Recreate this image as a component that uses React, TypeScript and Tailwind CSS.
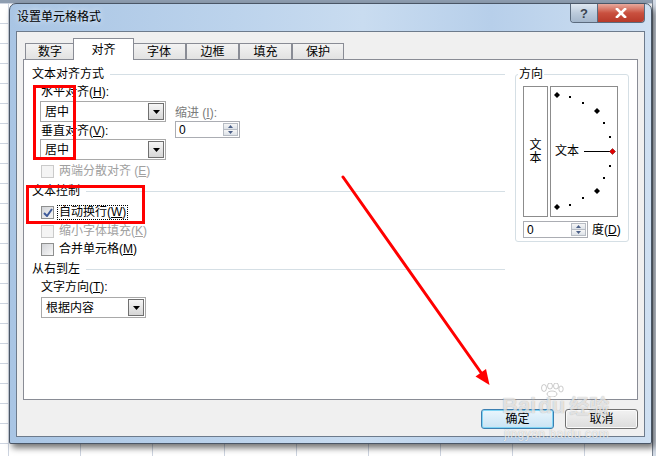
import React from "react";

const font = "font-['Liberation_Sans','Noto_Sans_CJK_SC',sans-serif]";

function DropBtn() {
  return (
    <div className="m-px flex w-[16px] items-center justify-center border border-[#707070] bg-gradient-to-b from-[#f6f6f6] to-[#d6d6d6]">
      <svg width="7" height="4" viewBox="0 0 7 4">
        <path d="M0 0H7L3.5 4Z" fill="#000" />
      </svg>
    </div>
  );
}

function Select({ value, cls }: { value: string; cls: string }) {
  return (
    <div className={`flex h-[21px] items-stretch border border-[#a9a9a9] bg-white ${cls}`}>
      <div className="flex flex-1 items-center pl-[4px] text-[12px] leading-none">{value}</div>
      <DropBtn />
    </div>
  );
}

function Spin({ cls }: { cls: string }) {
  return (
    <div className={`flex h-[17px] items-stretch border border-[#abadb3] bg-white ${cls}`}>
      <div className="flex flex-1 items-center pl-[3px] text-[12px] leading-none">0</div>
      <div className="m-px flex w-[15px] flex-col">
        <div className="flex flex-1 items-center justify-center border border-[#b7bcc4] bg-gradient-to-b from-[#f6f6f6] to-[#dde2e8]">
          <svg width="5" height="3" viewBox="0 0 5 3">
            <path d="M0 3H5L2.5 0Z" fill="#4c6088" />
          </svg>
        </div>
        <div className="-mt-px flex flex-1 items-center justify-center border border-[#b7bcc4] bg-gradient-to-b from-[#f6f6f6] to-[#dde2e8]">
          <svg width="5" height="3" viewBox="0 0 5 3">
            <path d="M0 0H5L2.5 3Z" fill="#4c6088" />
          </svg>
        </div>
      </div>
    </div>
  );
}

function Check({
  checked,
  disabled,
  focus,
  children,
  cls,
}: {
  checked?: boolean;
  disabled?: boolean;
  focus?: boolean;
  children: React.ReactNode;
  cls: string;
}) {
  return (
    <div className={`flex h-[14px] items-center ${cls}`}>
      <div
        className={`flex h-[13px] w-[13px] items-center justify-center border ${
          disabled ? "border-[#cacaca] bg-[#f4f4f4]" : "border-[#8e8f8f] bg-white"
        }`}
      >
        <div
          className={`flex h-[11px] w-[11px] items-center justify-center ${
            disabled ? "" : "bg-gradient-to-br from-[#d2d4d8] to-[#f8f8f8]"
          }`}
        >
          {checked && (
            <svg width="10" height="9" viewBox="0 0 10 9">
              <path d="M1 5L4 8L9 1" stroke="#3e5a9a" strokeWidth="2" fill="none" />
            </svg>
          )}
        </div>
      </div>
      <span
        className={`ml-[3px] px-[1px] text-[12px] leading-[13px] ${disabled ? "text-[#a0a0a0]" : "text-black"} ${
          focus ? "border border-dotted border-black" : "border border-transparent"
        }`}
      >
        {children}
      </span>
    </div>
  );
}

function Heading({ text }: { text: string }) {
  return (
    <div className="flex h-[14px] items-center">
      <span className="text-[12px] leading-[14px]">{text}</span>
      <div className="ml-[6px] h-px flex-1 bg-[#d5dfe5]" />
    </div>
  );
}

function Label({ children, cls }: { children: React.ReactNode; cls: string }) {
  return <div className={`h-[14px] text-[12px] leading-[14px] ${cls}`}>{children}</div>;
}

function Tab({ text, cls, active }: { text: string; cls: string; active?: boolean }) {
  return (
    <div
      className={`flex items-center justify-center border border-b-0 border-[#898c95] text-[12px] leading-none ${
        active
          ? "relative z-10 -mb-px h-[22px] bg-white"
          : "h-[16px] bg-gradient-to-b from-[#f3f3f3] to-[#e2e2e2]"
      } ${cls}`}
    >
      {text}
    </div>
  );
}

export default function App() {
  const dots: [number, number][] = [
    [19, 10],
    [32, 16],
    [53, 36],
    [59, 50],
    [59, 79],
    [53, 91],
    [32, 111],
    [19, 118],
  ];
  const diamonds: [number, number][] = [
    [6, 8],
    [46, 24],
    [46, 104],
    [6, 120],
  ];
  return (
    <div
      className={`relative h-[456px] w-[656px] overflow-hidden bg-white bg-[linear-gradient(#cdd4e0_1px,transparent_1px),linear-gradient(90deg,#cdd4e0_1px,transparent_1px)] bg-[length:72px_20px] bg-[position:8px_3px] text-black ${font}`}
    >
      {/* desktop strips */}
      <div className="absolute left-0 top-0 h-[3px] w-full bg-[#8e9db0]" />
      <div className="absolute right-0 top-0 h-full w-[4px] border-l border-[#7d8794] bg-[#d3dbe6]" />

      {/* window */}
      <div className="absolute left-[9px] top-[3px] flex h-[441px] w-[643px] flex-col rounded-t-[7px] rounded-b-[2px] border border-[#4a5666] bg-[linear-gradient(90deg,#a9c5e4,#bcd3ec_35%,#c9dcf0_55%,#b7cfea_75%,#cfe0f2)] shadow-[3px_4px_6px_rgba(0,0,0,0.55)]">
        {/* title bar */}
        <div className="flex h-[27px] items-start justify-between pr-[6px]">
          <div className="pl-[7px] pt-[6px] text-[12px] leading-[14px] [text-shadow:0_0_6px_rgba(255,255,255,0.9)]">
            设置单元格格式
          </div>
          <div className="flex h-[19px] overflow-hidden rounded-b-[4px] border border-t-0 border-[#5b6b7e]">
            <div className="flex w-[27px] items-center justify-center border-r border-[#5b6b7e] bg-gradient-to-b from-[#dfe8f2] via-[#bccbdc] to-[#a4b7cc] text-[13px] font-bold leading-none text-[#3b4450]">
              ?
            </div>
            <div className="flex w-[46px] items-center justify-center bg-gradient-to-b from-[#e7a99e] via-[#c9503f] to-[#b73a2a]">
              <svg width="12" height="10" viewBox="0 0 12 10">
                <path d="M2 1L10 9M10 1L2 9" stroke="#fff" strokeWidth="2.6" strokeLinecap="square" />
                <path d="M2 1L10 9M10 1L2 9" stroke="#fff" strokeWidth="1.6" />
              </svg>
            </div>
          </div>
        </div>

        {/* client */}
        <div className="mx-[6px] h-[406px] border border-[#6d7b8c] bg-[#f0f0f0] pl-[6px] pt-[7px]">
          {/* tabs */}
          <div className="ml-[2px] flex h-[20px] items-end">
            <Tab text="数字" cls="w-[50px]" />
            <Tab text="对齐" cls="-ml-[2px] -mr-[2px] w-[61px]" active />
            <Tab text="字体" cls="w-[54px]" />
            <Tab text="边框" cls="w-[53px]" />
            <Tab text="填充" cls="w-[53px]" />
            <Tab text="保护" cls="w-[52px]" />
          </div>

          {/* panel */}
          <div className="flex h-[341px] w-[615px] border border-[#898c95] bg-white pl-[8px] pt-[7px]">
            {/* left column */}
            <div className="flex w-[473px] flex-col">
              <Heading text="文本对齐方式" />
              <div className="ml-[8px] mt-[4px] flex">
                <div className="flex flex-col">
                  <Label cls="pl-[1px]">
                    水平对齐(<u>H</u>):
                  </Label>
                  <Select value="居中" cls="mt-[2px] w-[126px]" />
                  <Label cls="mt-[2px] pl-[1px]">
                    垂直对齐(<u>V</u>):
                  </Label>
                  <Select value="居中" cls="mt-[1px] w-[126px]" />
                  <Check disabled cls="mt-[4px] pl-[1px]">
                    两端分散对齐 (<u>E</u>)
                  </Check>
                </div>
                <div className="ml-[9px] mt-[21px] flex flex-col">
                  <Label cls="text-[#7b7b7b]">
                    缩进 (<u>I</u>):
                  </Label>
                  <Spin cls="mt-[1px] w-[65px]" />
                </div>
              </div>

              <div className="mt-[6px]">
                <Heading text="文本控制" />
              </div>
              <div className="ml-[9px] flex flex-col">
                <Check checked focus cls="mt-[7px]">
                  自动换行(<u>W</u>)
                </Check>
                <Check disabled cls="mt-[5px]">
                  缩小字体填充(<u>K</u>)
                </Check>
                <Check cls="mt-[4px]">
                  合并单元格(<u>M</u>)
                </Check>
              </div>

              <div className="mt-[6px]">
                <Heading text="从右到左" />
              </div>
              <div className="ml-[9px] flex flex-col">
                <Label cls="mt-[4px]">
                  文字方向(<u>T</u>):
                </Label>
                <Select value="根据内容" cls="mt-[3px] w-[105px]" />
              </div>
            </div>

            {/* right group */}
            <div className="relative ml-[10px] w-[114px] pt-[7px]">
              <div className="h-[168px] rounded-[3px] border border-[#d5dfe5] pl-[7px] pt-[11px]">
                <div className="flex">
                  <div className="flex h-[131px] w-[25px] flex-col items-center justify-center border border-[#8c8c8c] text-[12px] leading-[13px]">
                    <span>文</span>
                    <span>本</span>
                  </div>
                  <div className="relative ml-[2px] h-[131px] w-[68px] border border-[#8c8c8c]">
                    <span className="absolute left-[4px] top-[57px] text-[12px] leading-[14px]">文本</span>
                    <svg className="absolute left-0 top-0" width="66" height="129" viewBox="0 0 66 129">
                      <line x1="33" y1="64.5" x2="59" y2="64.5" stroke="#000" strokeWidth="1" />
                      {dots.map(([x, y], i) => (
                        <rect key={i} x={x - 1} y={y - 1} width="2" height="2" fill="#000" />
                      ))}
                      {diamonds.map(([x, y], i) => (
                        <path key={i} d={`M${x} ${y - 3}L${x + 3} ${y}L${x} ${y + 3}L${x - 3} ${y}Z`} fill="#000" />
                      ))}
                      <path d="M61.5 61.5L64.5 64.5L61.5 67.5L58.5 64.5Z" fill="#e00000" stroke="#600" strokeWidth="0.5" />
                    </svg>
                  </div>
                </div>
                <div className="mt-[4px] flex items-center">
                  <Spin cls="w-[65px]" />
                  <span className="ml-[4px] text-[12px] leading-[14px]">
                    度(<u>D</u>)
                  </span>
                </div>
              </div>
              <span className="absolute left-[3px] top-0 bg-white px-px text-[12px] leading-[14px]">方向</span>
            </div>
          </div>

          {/* buttons */}
          <div className="mt-[9px] flex w-[615px] justify-end gap-[11px]">
            <div className="flex h-[20px] w-[73px] items-center justify-center rounded-[3px] border border-[#3c7fb1] bg-gradient-to-b from-[#eaf6fd] to-[#c9e3f3] text-[12px] leading-none shadow-[inset_0_0_0_1px_#7fd4f4]">
              确定
            </div>
            <div className="flex h-[20px] w-[73px] items-center justify-center rounded-[3px] border border-[#707070] bg-gradient-to-b from-[#f2f2f2] to-[#dcdcdc] text-[12px] leading-none shadow-[inset_0_0_0_1px_#fbfbfb]">
              取消
            </div>
          </div>
        </div>
      </div>

      {/* watermark */}
      <div className="pointer-events-none absolute left-[502px] top-[395px] flex items-end text-[22px] font-bold leading-none text-white/70 [text-shadow:0_0_1px_rgba(0,0,0,0.35)]">
        <span>Bai</span>
        <span className="relative ml-[2px]">
          du
          <svg className="absolute -top-[12px] left-[2px]" width="24" height="14" viewBox="0 0 24 14">
            <g fill="rgba(255,255,255,0.7)" stroke="rgba(0,0,0,0.25)" strokeWidth="0.8">
              <ellipse cx="4" cy="5" rx="2.5" ry="3.5" />
              <ellipse cx="10" cy="3" rx="2.5" ry="3" />
              <ellipse cx="16" cy="3" rx="2.5" ry="3" />
              <ellipse cx="21" cy="6" rx="2.2" ry="3" />
              <ellipse cx="12" cy="11" rx="5" ry="3" />
            </g>
          </svg>
        </span>
        <span className="ml-[4px] text-[20px]">经验</span>
      </div>
      <div className="pointer-events-none absolute left-[504px] top-[428px] text-[12px] leading-none tracking-[0.5px] text-white/80 [text-shadow:0_0_1px_rgba(0,0,0,0.35)]">
        jingyan.baidu.com
      </div>

      {/* annotations */}
      <div className="pointer-events-none absolute left-[33px] top-[85px] h-[75px] w-[43px] border-[3px] border-[#ff0000]" />
      <div className="pointer-events-none absolute left-[26px] top-[185px] h-[39px] w-[119px] border-[3px] border-[#ff0000]" />
      <svg className="pointer-events-none absolute left-0 top-0" width="656" height="456" viewBox="0 0 656 456">
        <line x1="343" y1="177" x2="482" y2="374" stroke="#ff0000" strokeWidth="3" strokeLinecap="round" />
        <path d="M489.5 385L475.5 376.5L486 369Z" fill="#ff0000" />
      </svg>
    </div>
  );
}
